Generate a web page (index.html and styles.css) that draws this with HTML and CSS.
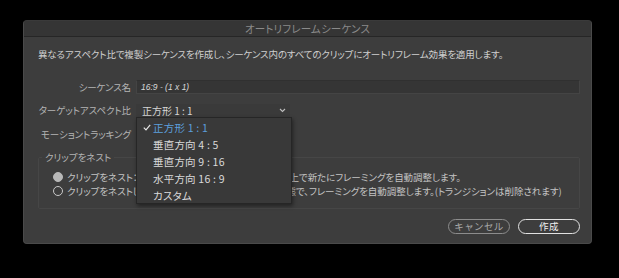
FILE: index.html
```html
<!DOCTYPE html>
<html lang="ja">
<head>
<meta charset="utf-8">
<link rel="stylesheet" href="styles.css">
</head>
<body>
<div class="dialog">
  <div class="titlebar">オートリフレームシーケンス</div>
  <div class="content">
    <p class="desc">異なるアスペクト比で複製シーケンスを作成し、シーケンス内のすべてのクリップにオートリフレーム効果を適用します。</p>
    <div class="form">
      <div class="row row-name">
        <span class="label">シーケンス名</span>
        <div class="input">16:9 - (1 x 1)</div>
      </div>
      <div class="row row-target">
        <span class="label">ターゲットアスペクト比</span>
        <div class="select"><span>正方形 1 : 1</span>
          <svg class="chev" width="7" height="5" viewBox="0 0 7 5"><path d="M1 1 L3.5 3.5 L6 1" fill="none" stroke="#bdbdbd" stroke-width="1.1"/></svg>
        </div>
      </div>
      <div class="row row-motion">
        <span class="label">モーショントラッキング</span>
        <div class="select-plain"></div>
      </div>
    </div>
    <fieldset class="group">
      <legend>クリップをネスト</legend>
      <label class="radio"><span class="dot on"></span><span>クリップをネスト：各クリップをネストしシーケンスとした上で新たにフレーミングを自動調整します。</span></label>
      <label class="radio"><span class="dot"></span><span>クリップをネストしない：元の各クリップをそのままの状態で、フレーミングを自動調整します。(トランジションは削除されます)</span></label>
    </fieldset>
    <div class="buttons">
      <button class="btn cancel">キャンセル</button>
      <button class="btn primary">作成</button>
    </div>
    <ul class="menu">
      <li class="item selected"><svg class="check" width="8" height="7" viewBox="0 0 8 7"><path d="M0.8 3.6 L3 5.8 L7.2 0.8" fill="none" stroke="#e6e6e6" stroke-width="1.2"/></svg>正方形 1 : 1</li>
      <li class="item">垂直方向 4 : 5</li>
      <li class="item">垂直方向 9 : 16</li>
      <li class="item">水平方向 16 : 9</li>
      <li class="item">カスタム</li>
    </ul>
  </div>
</div>
</body>
</html>
```
FILE: styles.css
```css
* { box-sizing: border-box; }
html, body { margin: 0; padding: 0; }
body {
  background: #000;
  width: 619px;
  height: 278px;
  overflow: hidden;
  font-family: "Noto Sans CJK JP", "Noto Sans", sans-serif;
  font-feature-settings: "palt";
  color: #c6c6c6;
  font-size: 9.5px;
}
.dialog {
  margin: 20px 0 0 23px;
  width: 569px;
  height: 224px;
  background: #3d3d3d;
  border-radius: 4px;
  border: 1px solid #4a4a4a;
  border-top-color: #3a3a3a;
  overflow: hidden;
}
.titlebar {
  height: 16px;
  background: #353535;
  border-bottom: 1px solid #262626;
  text-align: center;
  line-height: 15px;
  font-size: 10.5px;
  color: #8a8a8a;
  letter-spacing: 0.2px;
}
.content {
  position: relative;
  padding: 10px 11px 0 14px;
}
.desc {
  margin: 0;
  line-height: 14px;
  font-size: 9.5px;
  color: #cfcfcf;
  letter-spacing: -0.15px;
}
.form {
  margin-top: 19px;
}
.row {
  display: grid;
  grid-template-columns: 93px 1fr;
  column-gap: 5px;
  align-items: center;
}
.label {
  text-align: right;
  color: #b4b4b4;
  font-size: 9.5px;
  letter-spacing: -0.1px;
  white-space: nowrap;
}
.row-name { height: 14px; }
.row-target { height: 13px; margin-top: 9px; }
.row-motion { height: 12px; margin-top: 11px; }
.input {
  height: 14px;
  background: #353535;
  border: 1px solid #444;
  border-top-color: #303030;
  font-style: italic;
  font-family: "Liberation Sans", "Noto Sans CJK JP", sans-serif;
  font-size: 8.5px;
  line-height: 12px;
  padding-left: 4px;
  color: #d8d8d8;
}
.select {
  width: 154px;
  height: 13px;
  background: #3a3a3a;
  display: flex;
  align-items: center;
  justify-content: space-between;
  padding: 0 4px 0 6px;
  color: #d6d6d6;
  font-size: 10px;
  line-height: 13px;
}
.select-plain { height: 12px; }
.group {
  margin: 12px 0 0 0;
  border: 1px solid #464646;
  border-radius: 2px;
  padding: 7px 0 2px 14px;
  height: 58px;
}
.group legend {
  padding: 0 3px;
  margin-left: -11px;
  color: #b4b4b4;
  font-size: 9.5px;
  line-height: 12px;
}
.radio {
  display: flex;
  align-items: center;
  gap: 4px;
  height: 14px;
  color: #c4c4c4;
  font-size: 9.5px;
  letter-spacing: -0.05px;
  white-space: nowrap;
}
.dot {
  width: 10px;
  height: 10px;
  border-radius: 50%;
  border: 1.3px solid #c8c8c8;
  flex: none;
}
.dot.on {
  background: #b8b8b8;
  border-color: #b8b8b8;
}
.buttons {
  display: flex;
  justify-content: flex-end;
  gap: 8px;
  margin-top: 10px;
}
.btn {
  width: 62px;
  height: 15px;
  border-radius: 8px;
  background: transparent;
  font-family: inherit;
  font-size: 9.5px;
  line-height: 11px;
  letter-spacing: 0.4px;
  padding: 0;
}
.cancel {
  border: 1.3px solid #8c8c8c;
  color: #ababab;
}
.primary {
  border: 1.5px solid #e2e2e2;
  color: #f0f0f0;
}
.menu {
  position: absolute;
  left: 112px;
  top: 80px;
  width: 156px;
  height: 87px;
  margin: 0;
  padding: 1px 0 0 0;
  list-style: none;
  background: #393939;
  border: 1px solid #262626;
  box-shadow: 1px 2px 4px rgba(0,0,0,0.45);
}
.item {
  position: relative;
  height: 17px;
  line-height: 17px;
  padding-left: 16px;
  font-size: 10.5px;
  color: #dadada;
  letter-spacing: 0.2px;
}
.item.selected { color: #5c9fdc; }
.check {
  position: absolute;
  left: 6px;
  top: 5px;
}
```
